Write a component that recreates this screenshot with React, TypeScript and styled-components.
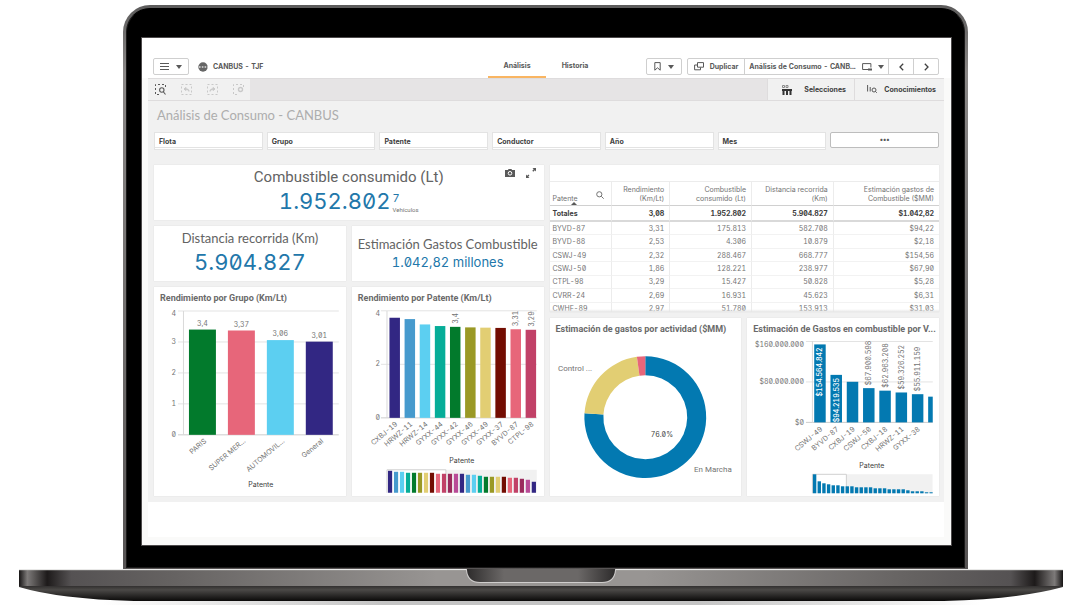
import React from "react";
import styled, { createGlobalStyle } from "styled-components";

const GlobalStyle = createGlobalStyle`
  * { box-sizing: border-box; }
  body {
    margin: 0;
    background: #fff;
    color: #595959;
    font-family: Inter, Roboto, "Liberation Sans", sans-serif;
    font-feature-settings: "zero", "tnum";
    font-size: 7px;
    line-height: 12px;
  }
  button { font: inherit; color: inherit; margin: 0; padding: 0; border: 0; background: none; }
  h1, h2, p { margin: 0; }
  svg { display: block; flex: none; }
`;

/* ---------- laptop ---------- */

const Laptop = styled.main`
  padding: 5px 17px 0 19px;
`;

const Lid = styled.div`
  margin: 0 95px 0 104px;
  padding: 3px;
  border-radius: 27px 27px 0 0;
  background: linear-gradient(#5c5b5b, #8a8786 12%, #6f6c6b 60%, #575454);
`;

const Bezel = styled.div`
  padding: 29px 13px 22px 15px;
  margin-bottom: -2px;
  border: 1px solid #1b1a1a;
  border-top-color: #000;
  border-radius: 24px 24px 0 0;
  background: #000;
`;

const Screen = styled.div`
  background: #fff;
  outline: 1px solid #4d4a4b;
`;

const Base = styled.svg`
  width: 100%;
  height: 36px;
`;

/* ---------- app chrome ---------- */

const TopBar = styled.header`
  display: grid;
  grid-template-columns: 1fr auto 1fr;
  align-items: end;
  height: 40px;
  padding: 0 12px 0 11px;
  font-weight: 700;
`;

const TopGroup = styled.div<{ $end?: boolean }>`
  display: flex;
  align-items: center;
  justify-content: ${(p) => (p.$end ? "flex-end" : "flex-start")};
  gap: ${(p) => (p.$end ? 5 : 9)}px;
  padding-bottom: 3px;
`;

const AppName = styled.div`
  display: flex;
  align-items: center;
  gap: 5px;
`;

const BoxButton = styled.button`
  display: flex;
  align-items: center;
  justify-content: center;
  gap: 7px;
  width: 36px;
  height: 17px;
  border: 1px solid #cfcfcf;
  border-radius: 2px;
  background: #fff;
`;

const ButtonGroup = styled.div`
  display: flex;
  height: 17px;
  border: 1px solid #cfcfcf;
  border-radius: 2px;
`;

const GroupButton = styled.button<{ $width: number }>`
  display: flex;
  align-items: center;
  justify-content: center;
  gap: 6px;
  width: ${(p) => p.$width}px;
  font-weight: 700;
  white-space: nowrap;
  & + & { border-left: 1px solid #cfcfcf; }
`;

const Tabs = styled.nav`
  display: flex;
`;

const Tab = styled.a<{ $active?: boolean }>`
  width: 58px;
  padding: 0 0 4px;
  border-bottom: 2px solid ${(p) => (p.$active ? "#f9b562" : "transparent")};
  color: inherit;
  text-align: center;
  text-decoration: none;
`;

const Backdrop = styled.div`
  padding: 0 7px 8px 6px;
  background: #fafaf9;
`;

const Workspace = styled.div`
  padding-bottom: 35px;
  background: #fff;
`;

const Toolbar = styled.div`
  display: flex;
  height: 23px;
  border-top: 1px solid #dedcdd;
  border-bottom: 1px solid #dedcdd;
  background: #e6e4e5;
`;

const ToolSet = styled.div`
  display: flex;
  align-items: center;
  gap: 15px;
  width: 102px;
  padding-left: 7px;
  background: #f1f1f1;
`;

const ToolTabs = styled.div`
  display: flex;
  margin-left: auto;
  background: #f1f1f1;
`;

const ToolTab = styled.button<{ $width: number; $gap: number }>`
  display: flex;
  align-items: center;
  justify-content: flex-end;
  gap: ${(p) => p.$gap}px;
  width: ${(p) => p.$width}px;
  padding-right: 8px;
  border-left: 1px solid #dedcdd;
  color: #404040;
  font-weight: 700;
`;

/* ---------- sheet ---------- */

const Sheet = styled.section`
  padding: 6px 5px 6px 6px;
  background: #f1f1f1;
`;

const SheetTitle = styled.h1`
  padding: 0 3px;
  color: #adadad;
  font-family: Lato, Roboto, sans-serif;
  font-size: 13px;
  font-weight: 400;
  line-height: 16px;
`;

const Filters = styled.div`
  display: grid;
  grid-template-columns: repeat(7, 1fr);
  align-items: start;
  gap: 4px;
  margin: 9px 0 15px;
`;

const Filter = styled.button`
  height: 18px;
  padding: 1px 4px 0;
  border: 1px solid #e3e3e3;
  background: linear-gradient(#fff 14px, #e3e3e3 14px, #e3e3e3 15px, #fff 15px);
  color: #404040;
  font-weight: 700;
  line-height: 12px;
  text-align: left;
`;

const MoreFilters = styled.button`
  height: 16px;
  border: 1px solid #bdbdbd;
  border-radius: 2px;
  background: #fff;
  font-weight: 700;
  line-height: 12px;
`;

const Dashboard = styled.div`
  display: grid;
  grid-template-columns: 1fr 1fr;
  gap: 6px;
`;

const Column = styled.div`
  display: flex;
  flex-direction: column;
  gap: 6px;
  min-width: 0;
`;

const Pair = styled.div`
  display: grid;
  grid-template-columns: 1fr 1fr;
  gap: 6px;
`;

const Card = styled.article`
  position: relative;
  min-width: 0;
  background: #fff;
  box-shadow: 0 0 1px #d4d4d4;
`;

const Kpi = styled(Card)`
  display: flex;
  flex-direction: column;
  align-items: center;
  justify-content: center;
  height: 55px;
  padding-bottom: 3px;
  white-space: nowrap;
`;

const KpiTitle = styled.h2<{ $large?: boolean }>`
  color: #636363;
  font-family: ${(p) => (p.$large ? "Roboto" : "Lato, Roboto")}, sans-serif;
  font-size: ${(p) => (p.$large ? 15 : 13)}px;
  font-weight: 400;
  line-height: 20px;
`;

const KpiValue = styled.p<{ $small?: boolean }>`
  display: flex;
  color: #2277aa;
  font-size: ${(p) => (p.$small ? 13 : 22)}px;
  line-height: ${(p) => (p.$small ? 16 : 28)}px;
`;

const KpiExtra = styled.span`
  display: flex;
  flex-direction: column;
  padding: 6px 0 0 2px;
  font-size: 11px;
  line-height: 10px;
`;

const KpiCaption = styled.small`
  padding-top: 3px;
  color: #737373;
  font-family: Roboto, sans-serif;
  font-size: 6px;
  line-height: 8px;
`;

const CardActions = styled.div`
  position: absolute;
  top: 3px;
  right: 8px;
  display: flex;
  gap: 11px;
`;

const CardTitle = styled.h2`
  padding: 5px 6px 0;
  color: #6a6a6a;
  font-family: Roboto, sans-serif;
  font-size: 9px;
  font-weight: 700;
  line-height: 12px;
  white-space: nowrap;
`;

const Chart = styled.svg`
  width: 100%;
  height: auto;
  font-size: 7px;
  fill: #737373;
`;

const TableCard = styled(Card)`
  height: 147px;
  padding-top: 16px;
  overflow: hidden;
  &::after {
    content: "";
    position: absolute;
    inset: auto 0 0;
    height: 3px;
    background: linear-gradient(transparent, #e6e6e6);
  }
`;

const Table = styled.table`
  width: 100%;
  height: 135px;
  border-collapse: separate;
  border-spacing: 0;
  table-layout: fixed;
  color: #737373;
  line-height: 9px;
  col:nth-child(1) { width: 16%; }
  col:nth-child(2) { width: 15%; }
  col:nth-child(3) { width: 21%; }
  col:nth-child(4) { width: 21%; }
`;

const Cell = styled.td<{ $head?: boolean; $total?: boolean; $left?: boolean }>`
  height: ${(p) => (p.$head ? "25px" : p.$total ? "16px" : "auto")};
  padding: ${(p) => (p.$head ? "0 5px 2px 3px" : "0 5px 0 3px")};
  border-right: 1px solid #ececec;
  border-top: ${(p) => (p.$head ? "1px solid #ececec" : "0")};
  border-bottom: ${(p) => (p.$total ? "2px solid #d9d9d9" : p.$head ? "1px solid #d0d0d0" : "1px solid #f2f2f2")};
  color: ${(p) => (p.$total ? "#404040" : "inherit")};
  font-weight: ${(p) => (p.$total ? 700 : 400)};
  text-align: ${(p) => (p.$left ? "left" : "right")};
  vertical-align: ${(p) => (p.$head ? "bottom" : "middle")};
  white-space: pre;
  &:last-child { border-right: 0; }
`;

const HeadFlex = styled.div`
  display: flex;
  justify-content: space-between;
  align-items: flex-end;
  svg { margin: 0 2px 4px 0; }
`;

const SortMark = styled.span`
  display: block;
  position: absolute;
  left: 21px;
  top: 37px;
  border: 3px solid transparent;
  border-top: 0;
  border-bottom-color: #595959;
`;

/* ---------- icons ---------- */

const Caret = () => (
  <svg width="6" height="4" viewBox="0 0 6 4"><path d="M0 0h6L3 4z" fill="#595959" /></svg>
);

const MenuIcon = () => (
  <svg width="9" height="8" viewBox="0 0 9 8"><path d="M0 .5h9M0 3.500h9M0 6.500h9" stroke="#595959" strokeWidth="1" /></svg>
);

const AppIcon = () => (
  <svg width="10" height="10" viewBox="0 0 10 10">
    <circle cx="5" cy="5" r="4.7" fill="#666" />
    <path d="M0 5h10" stroke="#ddd" strokeWidth="1.6" strokeDasharray="1.6 1.2" strokeDashoffset="-1" />
  </svg>
);

const BookmarkIcon = () => (
  <svg width="7" height="9" viewBox="0 0 7 9"><path d="M.8.6h5.4v7.6L3.5 5.8.8 8.2z" fill="none" stroke="#595959" /></svg>
);

const DuplicateIcon = () => (
  <svg width="10" height="9" viewBox="0 0 10 9">
    <path d="M3.5.6h6v4.6h-6zM3 3H.6v4.8H6.500V5.500" fill="none" stroke="#595959" />
  </svg>
);

const SheetIcon = () => (
  <svg width="10" height="8" viewBox="0 0 10 8">
    <path d="M6 6.500H.6V.6h8.300V4.500" fill="none" stroke="#595959" />
    <path d="M6 5.500h4v2H6z" fill="#595959" />
  </svg>
);

const Chevron = ({ right }: { right?: boolean }) => (
  <svg width="5" height="8" viewBox="0 0 5 8">
    <path d={right ? "M.8.8 4 4 .8 7.200" : "M4.200.8 1 4l3.200 3.200"} fill="none" stroke="#404040" strokeWidth="1.3" />
  </svg>
);

const SelectionIcon = ({ kind }: { kind: "lasso" | "back" | "forward" | "clear" }) => {
  const color = kind === "lasso" ? "#595959" : "#c9c9c9";
  return (
    <svg width="11" height="11" viewBox="0 0 11 11" fill="none" stroke={color}>
      <path
        d={kind === "lasso" || kind === "clear" ? "M10.500 3V.5H.5v10H4" : "M.5.5h10v10H.5z"}
        strokeDasharray="2 2"
      />
      {kind === "lasso" && <path d="M9 6a2.200 2.200 0 1 1-4.400 0 2.200 2.200 0 0 1 4.400 0zM8.500 8l2 2.500" strokeWidth="1.100" />}
      {kind === "back" && <path d="M8 7.500c0-2-1-2.500-3-2.500M5 3.500 3 5l2 1.500z" fill={color} />}
      {kind === "forward" && <path d="M3 7.500c0-2 1-2.500 3-2.500M6 3.500 8 5 6 6.500z" fill={color} />}
      {kind === "clear" && <path d="M9.500 5.500a2 2 0 1 1-4 0 2 2 0 0 1 4 0z" strokeWidth="1.400" />}
    </svg>
  );
};

const SelectionsIcon = () => (
  <svg width="10" height="10" viewBox="0 0 10 10">
    <path d="M.5.5h2v2h-2zM4 .5h2v2H4z" fill="none" stroke="#8a8a8a" />
    <path d="M0 5h10M1.500 4.500V10M5 4.500V10M8.500 4.500V10" stroke="#333" strokeWidth="2" />
  </svg>
);

const InsightsIcon = () => (
  <svg width="10" height="9" viewBox="0 0 10 9" fill="none" stroke="#595959">
    <path d="M.6 0v6.500M3.200 2v4.500" />
    <circle cx="7" cy="5" r="2" />
    <path d="m8.300 6.300 1.500 1.500" />
  </svg>
);

const CameraIcon = () => (
  <svg width="10" height="8" viewBox="0 0 10 8">
    <path d="M0 1h3l.5-1h3L7 1h3v7H0z" fill="#595959" />
    <circle cx="5" cy="4.300" r="1.800" fill="none" stroke="#fff" />
  </svg>
);

const ExpandIcon = () => (
  <svg width="10" height="10" viewBox="0 0 10 10" fill="#595959">
    <path d="M6.500 0H10v3.500L8.800 2.300 7.300 3.800l-1-1L7.700 1.200zM0 6.500l1.200 1.200 1.200-1.200 1 1-1.200 1.200L3.500 10H0z" />
  </svg>
);

const SearchIcon = () => (
  <svg width="8" height="8" viewBox="0 0 8 8" fill="none" stroke="#737373">
    <circle cx="3.300" cy="3.300" r="2.600" />
    <path d="m5.300 5.300 2.400 2.400" />
  </svg>
);

/* ---------- data ---------- */

const palette = [
  "#322783", "#469acd", "#5ccff1", "#06ad98", "#027a2c", "#9a9925",
  "#e2ce73", "#730d02", "#e7667a", "#c14167", "#9b2a5d", "#b94b97",
];

const groups = [
  { name: "PARIS", value: 3.4, label: "3,4", color: "#027a2c" },
  { name: "SUPER MER...", value: 3.37, label: "3,37", color: "#e7667a" },
  { name: "AUTOMOVIL...", value: 3.06, label: "3,06", color: "#5ccff1" },
  { name: "General", value: 3.01, label: "3,01", color: "#322783" },
];

const plates = [
  { name: "CXBJ-19", value: 3.74 },
  { name: "HRWZ-11", value: 3.69 },
  { name: "HRWZ-14", value: 3.49 },
  { name: "GYXX-44", value: 3.43 },
  { name: "GYXX-42", value: 3.4, label: "3,4" },
  { name: "GYXX-46", value: 3.38 },
  { name: "GYXX-49", value: 3.37 },
  { name: "GYXX-37", value: 3.36 },
  { name: "BYVD-87", value: 3.31, label: "3,31" },
  { name: "CTPL-98", value: 3.29, label: "3,29" },
];

const plateOverview = [22, 21, 21, 20, 20, 20, 20, 20, 19, 19, 19, 19, 19, 18, 18, 17, 16, 16, 16, 16, 15, 15, 14, 13, 11];

const costs = [
  { name: "CSWJ-49", value: 154.6, label: "$154.564.842", inside: true },
  { name: "BYVD-87", value: 94.2, label: "$94.219.535", inside: true },
  { name: "CXBJ-19", value: 80.5 },
  { name: "CSWJ-50", value: 67.9, label: "$67.900.598" },
  { name: "CXBJ-18", value: 62.9, label: "$62.963.208" },
  { name: "HRWZ-11", value: 59.3, label: "$59.326.252" },
  { name: "GYXX-38", value: 55.9, label: "$55.911.159" },
  { name: "", value: 51 },
];

const costOverview = [19, 12, 10, 9, 8, 8, 7, 7, 7, 6, 6, 6, 6, 5, 5, 5, 4, 4, 4, 4, 3, 2, 2, 2, 1, 1];

const rows = [
  ["BYVD-87", "3,31", "175.813", "582.708", "$94,22"],
  ["BYVD-88", "2,53", "4.306", "10.879", "$2,18"],
  ["CSWJ-49", "2,32", "288.467", "668.777", "$154,56"],
  ["CSWJ-50", "1,86", "128.221", "238.977", "$67,90"],
  ["CTPL-98", "3,29", "15.427", "50.828", "$5,28"],
  ["CVRR-24", "2,69", "16.931", "45.623", "$6,31"],
  ["CWHF-89", "2,97", "51.780", "153.913", "$31,03"],
];

/* ---------- charts ---------- */

const Slanted = ({ x, y, children }: { x: number; y: number; children: string }) => (
  <text textAnchor="end" transform={`translate(${x} ${y}) rotate(-40)`}>{children}</text>
);

const GroupChart = () => (
  <Chart viewBox="0 0 192 192">
    {[0, 1, 2, 3, 4].map((n) => (
      <g key={n}>
        <path d={`M24 ${131 - n * 31}h161`} stroke={n ? "#e3e3e3" : "#ccc"} />
        <text x="22" y={n === 4 ? 12 : 133 - n * 31} textAnchor="end">{n}</text>
      </g>
    ))}
    <path d="M29.500 7v124" stroke="#d9d9d9" />
    {groups.map((g, i) => (
      <g key={g.name}>
        <rect x={35 + i * 39} y={131 - g.value * 31} width="27" height={g.value * 31} fill={g.color} />
        <text x={48.5 + i * 39} y={127 - g.value * 31} textAnchor="middle">{g.label}</text>
        <Slanted x={53 + i * 39} y={138}>{g.name}</Slanted>
      </g>
    ))}
    <text x="107" y="183" textAnchor="middle" fill="#404040">Patente</text>
  </Chart>
);

const PlateChart = () => (
  <Chart viewBox="0 0 192 192">
    {[0, 2, 4].map((n) => (
      <g key={n}>
        <path d={`M29 ${114 - n * 26.8}h156`} stroke={n ? "#e3e3e3" : "#ccc"} />
        <text x="28" y={n === 4 ? 12 : 116 - n * 26.8} textAnchor="end">{n}</text>
      </g>
    ))}
    <path d="M35 7v107" stroke="#d9d9d9" />
    {plates.map((p, i) => (
      <g key={p.name}>
        <rect x={37.5 + i * 15.15} y={114 - p.value * 26.8} width="10.500" height={p.value * 26.8} fill={palette[i]} />
        {p.label && (
          <text transform={`translate(${45.5 + i * 15.15} ${111 - p.value * 26.8}) rotate(-90)`}>{p.label}</text>
        )}
        <Slanted x={46 + i * 15.15} y={121}>{p.name}</Slanted>
      </g>
    ))}
    <text x="110" y="159" textAnchor="middle" fill="#404040">Patente</text>
    <path d="M94 166h91v23H94z" fill="#f1f1f1" />
    <path d="M35 189v-23h59v23" fill="none" stroke="#d0d0d0" />
    {plateOverview.map((h, i) => (
      <rect key={i} x={36 + i * 6} y={189 - h} width="4.200" height={h} fill={palette[i % 12]} />
    ))}
  </Chart>
);

const center = { x: 95.4, y: 82.3 };
const point = (share: number, r: number) => {
  const a = share * Math.PI * 2;
  return `${center.x + r * Math.sin(a)} ${center.y - r * Math.cos(a)}`;
};
const ring = (from: number, to: number) => {
  const large = to - from > 0.5 ? 1 : 0;
  return `M${point(from, 61)}A61 61 0 ${large} 1 ${point(to, 61)}L${point(to, 42)}A42 42 0 ${large} 0 ${point(from, 42)}z`;
};

const ActivityChart = () => (
  <Chart viewBox="0 0 192 161">
    <path d={ring(0, 0.76)} fill="#0379b1" />
    <path d={ring(0.76, 0.978)} fill="#e2ce73" />
    <path d={ring(0.978, 1)} fill="#e7667a" />
    <g fontSize="8" fontFamily="Roboto, sans-serif">
      <text x="8" y="36">Control ...</text>
      <text x="182" y="137" textAnchor="end">En Marcha</text>
    </g>
    <text x="112" y="102" textAnchor="middle" fill="#404040">76.0%</text>
  </Chart>
);

const CostChart = () => (
  <Chart viewBox="-1 0 192 161">
    <clipPath id="plot"><path d="M0 0h185v161H0z" /></clipPath>
    {["$0", "$80.000.000", "$160.000.000"].map((label, n) => (
      <g key={label}>
        <path d={`M58 ${87.5 - n * 40.5}h127`} stroke={n ? "#e3e3e3" : "#ccc"} />
        <text x="56" y={n === 2 ? 12 : 90 - n * 40.5} textAnchor="end">{label}</text>
      </g>
    ))}
    <path d="M64.500 6v82" stroke="#d9d9d9" />
    <g clipPath="url(#plot)">
      {costs.map((c, i) => {
        const h = c.value * 0.505;
        return (
          <g key={i}>
            <rect x={66.3 + i * 16.3} y={87.5 - h} width="11.500" height={h} fill="#0379b1" />
            {c.label && (
              <text
                transform={`translate(${74.5 + i * 16.3} ${c.inside ? 90.5 - h : 84.5 - h}) rotate(-90)`}
                textAnchor={c.inside ? "end" : "start"}
                fill={c.inside ? "#fff" : "#737373"}
                fontWeight={c.inside ? 500 : 400}
              >
                {c.label}
              </text>
            )}
            <Slanted x={75 + i * 16.3} y={95}>{c.name}</Slanted>
          </g>
        );
      })}
      <path d="M98.500 139.500H185v19H98.500z" fill="#f1f1f1" />
      <path d="M64.500 158.500v-19h34v19" fill="none" stroke="#d0d0d0" />
      {costOverview.map((h, i) => (
        <rect key={i} x={65 + i * 4.67} y={158.5 - h} width="3.400" height={h} fill="#0379b1" />
      ))}
    </g>
    <text x="124" y="133" textAnchor="middle" fill="#404040">Patente</text>
  </Chart>
);

const FuelTable = () => (
  <TableCard>
    <Table>
      <colgroup><col /><col /><col /><col /><col /></colgroup>
      <thead>
        <tr>
          <Cell as="th" $head $left>
            <HeadFlex>Patente<SearchIcon /></HeadFlex>
            <SortMark />
          </Cell>
          <Cell as="th" $head>{"Rendimiento\n(Km/Lt)"}</Cell>
          <Cell as="th" $head>{"Combustible\nconsumido (Lt)"}</Cell>
          <Cell as="th" $head>{"Distancia recorrida\n(Km)"}</Cell>
          <Cell as="th" $head>{"Estimación gastos de\nCombustible ($MM)"}</Cell>
        </tr>
        <tr>
          {["Totales", "3,08", "1.952.802", "5.904.827", "$1.042,82"].map((t, i) => (
            <Cell key={t} $total $left={i === 0}>{t}</Cell>
          ))}
        </tr>
      </thead>
      <tbody>
        {rows.map((r) => (
          <tr key={r[0]}>
            {r.map((t, i) => <Cell key={i} $left={i === 0}>{t}</Cell>)}
          </tr>
        ))}
      </tbody>
    </Table>
  </TableCard>
);

const LaptopBase = () => (
  <Base viewBox="0 0 1044 36" preserveAspectRatio="none" aria-hidden="true">
    <defs>
      <linearGradient id="deck">
        <stop offset="0" stopColor="#161414" />
        <stop offset="0.008" stopColor="#7d7a79" />
        <stop offset="0.027" stopColor="#1d1a1a" />
        <stop offset="0.050" stopColor="#555253" />
        <stop offset="0.150" stopColor="#666362" />
        <stop offset="0.400" stopColor="#989593" />
        <stop offset="0.600" stopColor="#989593" />
        <stop offset="0.850" stopColor="#666362" />
        <stop offset="0.950" stopColor="#555253" />
        <stop offset="0.973" stopColor="#1d1a1a" />
        <stop offset="0.992" stopColor="#7d7a79" />
        <stop offset="1" stopColor="#161414" />
      </linearGradient>
      <linearGradient id="belly" x2="0" y2="1">
        <stop offset="0" stopColor="#2b2929" />
        <stop offset="0.300" stopColor="#4b4947" />
        <stop offset="1" stopColor="#0a0909" />
      </linearGradient>
      <linearGradient id="notch">
        <stop offset="0" stopColor="#2e2c2c" />
        <stop offset="0.250" stopColor="#6b6867" />
        <stop offset="0.750" stopColor="#6b6867" />
        <stop offset="1" stopColor="#2e2c2c" />
      </linearGradient>
      <linearGradient id="floor">
        <stop offset="0.080" stopColor="#fff" />
        <stop offset="0.350" stopColor="#c4c4c4" />
        <stop offset="0.650" stopColor="#c4c4c4" />
        <stop offset="0.920" stopColor="#fff" />
      </linearGradient>
    </defs>
    <path d="M0 31h1044v5H0z" fill="url(#floor)" />
    <path d="M0 16h1044v2Q1000 30 925 32H115Q40 30 0 18z" fill="url(#belly)" />
    <path d="M0 1h1044v16H0z" fill="url(#deck)" />
    <path d="M0 1h1044" stroke="#b3b0af" strokeOpacity=".6" />
    <path d="M447 0h150v1q-1 13-14 13H461q-13 0-14-13z" fill="#d0cecd" />
    <path d="M448 0h148v1q-1 12-13 12H461q-12 0-13-12z" fill="url(#notch)" />
  </Base>
);

/* ---------- page ---------- */

export default function App() {
  return (
    <>
      <GlobalStyle />
      <Laptop>
        <Lid>
          <Bezel>
            <Screen>
              <TopBar>
                <TopGroup>
                  <BoxButton aria-label="Menú"><MenuIcon /><Caret /></BoxButton>
                  <AppName><AppIcon />CANBUS - TJF</AppName>
                </TopGroup>
                <Tabs>
                  <Tab href="#analisis" $active>Análisis</Tab>
                  <Tab href="#historia">Historia</Tab>
                </Tabs>
                <TopGroup $end>
                  <BoxButton aria-label="Marcadores"><BookmarkIcon /><Caret /></BoxButton>
                  <ButtonGroup>
                    <GroupButton $width={56}><DuplicateIcon />Duplicar</GroupButton>
                    <GroupButton $width={144}>Análisis de Consumo - CANB...<SheetIcon /><Caret /></GroupButton>
                    <GroupButton $width={25} aria-label="Anterior"><Chevron /></GroupButton>
                    <GroupButton $width={25} aria-label="Siguiente"><Chevron right /></GroupButton>
                  </ButtonGroup>
                </TopGroup>
              </TopBar>
              <Backdrop>
                <Workspace>
                  <Toolbar>
                    <ToolSet>
                      <SelectionIcon kind="lasso" />
                      <SelectionIcon kind="back" />
                      <SelectionIcon kind="forward" />
                      <SelectionIcon kind="clear" />
                    </ToolSet>
                    <ToolTabs>
                      <ToolTab $width={87} $gap={12}><SelectionsIcon />Selecciones</ToolTab>
                      <ToolTab $width={90} $gap={7}><InsightsIcon />Conocimientos</ToolTab>
                    </ToolTabs>
                  </Toolbar>
                  <Sheet>
                    <SheetTitle>Análisis de Consumo - CANBUS</SheetTitle>
                    <Filters>
                      {["Flota", "Grupo", "Patente", "Conductor", "Año", "Mes"].map((f) => (
                        <Filter key={f}>{f}</Filter>
                      ))}
                      <MoreFilters>•••</MoreFilters>
                    </Filters>
                    <Dashboard>
                      <Column>
                        <Kpi>
                          <KpiTitle $large>Combustible consumido (Lt)</KpiTitle>
                          <KpiValue>
                            1.952.802
                            <KpiExtra>7<KpiCaption>Vehículos</KpiCaption></KpiExtra>
                          </KpiValue>
                          <CardActions>
                            <button aria-label="Captura"><CameraIcon /></button>
                            <button aria-label="Ampliar"><ExpandIcon /></button>
                          </CardActions>
                        </Kpi>
                        <Pair>
                          <Kpi>
                            <KpiTitle>Distancia recorrida (Km)</KpiTitle>
                            <KpiValue>5.904.827</KpiValue>
                          </Kpi>
                          <Kpi>
                            <KpiTitle>Estimación Gastos Combustible</KpiTitle>
                            <KpiValue $small>1.042,82 millones</KpiValue>
                          </Kpi>
                        </Pair>
                        <Pair>
                          <Card><CardTitle>Rendimiento por Grupo (Km/Lt)</CardTitle><GroupChart /></Card>
                          <Card><CardTitle>Rendimiento por Patente (Km/Lt)</CardTitle><PlateChart /></Card>
                        </Pair>
                      </Column>
                      <Column>
                        <FuelTable />
                        <Pair>
                          <Card><CardTitle>Estimación de gastos por actividad ($MM)</CardTitle><ActivityChart /></Card>
                          <Card><CardTitle>Estimación de Gastos en combustible por V...</CardTitle><CostChart /></Card>
                        </Pair>
                      </Column>
                    </Dashboard>
                  </Sheet>
                </Workspace>
              </Backdrop>
            </Screen>
          </Bezel>
        </Lid>
        <LaptopBase />
      </Laptop>
    </>
  );
}
